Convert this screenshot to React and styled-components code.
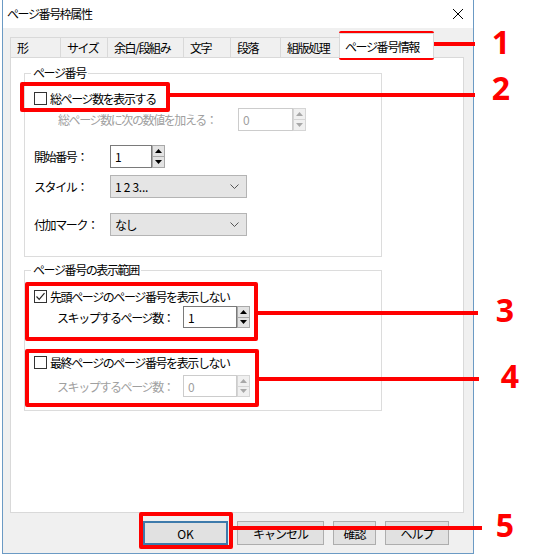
import React from "react";
import styled, { createGlobalStyle } from "styled-components";

const GlobalStyle = createGlobalStyle`
  html, body {
    margin: 0;
    padding: 0;
    background: #fff;
  }
  body {
    font-family: "Noto Sans CJK JP", "Noto Sans", sans-serif;
    font-size: 12px;
    letter-spacing: -1.4px;
    color: #000;
  }
`;

const red = "#ff0000";

const Page = styled.div`
  position: relative;
  width: 535px;
  height: 555px;
  overflow: hidden;
`;

const Window = styled.div`
  box-sizing: border-box;
  margin-left: 2px;
  width: 472px;
  height: 554px;
  border: 1px solid #6b9ac4;
  border-top: none;
  background: #f0f0f0;
  display: flex;
  flex-direction: column;
`;

const TitleBar = styled.div`
  flex: 0 0 28px;
  background: #fff;
  display: flex;
  align-items: center;
  justify-content: space-between;
  padding: 0 9px 0 4px;
`;

const Title = styled.span`
  line-height: 16px;
`;

const Client = styled.div`
  flex: 1;
  display: flex;
  flex-direction: column;
  padding: 5px 9px 0 7px;
`;

const TabRow = styled.div`
  display: flex;
  align-items: flex-end;
  height: 25px;
  margin-bottom: -1px;
  position: relative;
  z-index: 1;
`;

const Tab = styled.div`
  box-sizing: border-box;
  width: ${(p) => p.$w}px;
  height: ${(p) => (p.$active ? 25 : 21)}px;
  margin-left: ${(p) => (p.$first ? 0 : -1)}px;
  padding-left: ${(p) => (p.$active ? 5 : 6)}px;
  display: flex;
  align-items: center;
  border: 1px solid #d9d9d9;
  border-bottom: ${(p) => (p.$active ? "none" : "1px solid #d9d9d9")};
  background: ${(p) => (p.$active ? "#fff" : "#f0f0f0")};
  white-space: nowrap;
`;

const Panel = styled.div`
  box-sizing: border-box;
  height: 456px;
  border: 1px solid #d9d9d9;
  background: #fff;
  padding: 15px 0 0 13px;
`;

const Group = styled.div`
  box-sizing: border-box;
  position: relative;
  width: 358px;
  height: ${(p) => p.$h}px;
  margin-top: ${(p) => p.$mt || 0}px;
  border: 1px solid #dcdcdc;
`;

const GroupLabel = styled.span`
  position: absolute;
  top: -9px;
  left: 6px;
  padding: 0 2px;
  line-height: 16px;
  background: #fff;
`;

const GroupBody = styled.div`
  display: flex;
  flex-direction: column;
  padding-left: 9px;
`;

const Row = styled.div`
  display: flex;
  align-items: center;
  height: ${(p) => p.$h}px;
  margin-top: ${(p) => p.$mt || 0}px;
  padding-left: ${(p) => p.$indent || 0}px;
`;

const Label = styled.span`
  flex: 0 0 ${(p) => p.$w}px;
  color: ${(p) => (p.$disabled ? "#a0a0a0" : "#000")};
  white-space: nowrap;
`;

const Box = styled.span`
  box-sizing: border-box;
  flex: 0 0 13px;
  width: 13px;
  height: 13px;
  border: 1px solid #333;
  background: #fff;
  margin-right: 3px;
  display: flex;
  align-items: center;
  justify-content: center;
`;

const Field = styled.div`
  display: flex;
  height: 100%;
`;

const NumberInput = styled.div`
  box-sizing: border-box;
  width: ${(p) => p.$w}px;
  height: 100%;
  border: 1px solid ${(p) => (p.$disabled ? "#cccccc" : "#7a7a7a")};
  background: #fff;
  color: ${(p) => (p.$disabled ? "#a0a0a0" : "#000")};
  padding-left: 4px;
  letter-spacing: 0;
  display: flex;
  align-items: center;
`;

const Spinner = styled.div`
  display: flex;
  flex-direction: column;
  width: 13px;
  height: 100%;
`;

const SpinButton = styled.div`
  box-sizing: border-box;
  flex: 1;
  display: flex;
  align-items: center;
  justify-content: center;
  background: ${(p) => (p.$disabled ? "#f0f0f0" : "#e3e3e3")};
  border: 1px solid ${(p) => (p.$disabled ? "#d5d5d5" : "#a8a8a8")};
  & + & {
    border-top: none;
  }
`;

const Select = styled.div`
  box-sizing: border-box;
  width: 137px;
  height: 100%;
  background: #e5e5e5;
  border: 1px solid #b4b4b4;
  padding: 0 7px 0 4px;
  display: flex;
  align-items: center;
  justify-content: space-between;
`;

const SelectValue = styled.span`
  letter-spacing: ${(p) => (p.$latin ? "-0.3px" : "inherit")};
`;

const ButtonBar = styled.div`
  display: flex;
  justify-content: flex-end;
  gap: 9px;
  margin-top: 8px;
  padding-right: 15px;
`;

const Button = styled.div`
  box-sizing: border-box;
  width: ${(p) => p.$w}px;
  height: 24px;
  background: #e1e1e1;
  border: ${(p) => (p.$default ? "2px solid #3d7aab" : "1px solid #adadad")};
  letter-spacing: ${(p) => (p.$latin ? 0 : "-1px")};
  display: flex;
  align-items: center;
  justify-content: center;
`;

const Overlay = styled.div`
  position: absolute;
  inset: 0;
  pointer-events: none;
`;

const Mark = styled.div`
  position: absolute;
  box-sizing: border-box;
  left: ${(p) => p.$x}px;
  top: ${(p) => p.$y}px;
  width: ${(p) => p.$w}px;
  height: ${(p) => p.$h}px;
  border: 4px solid ${red};
  border-radius: 2px;
`;

const Leader = styled.div`
  position: absolute;
  left: ${(p) => p.$x1}px;
  top: ${(p) => p.$y - 2}px;
  width: ${(p) => p.$x2 - p.$x1}px;
  height: 4px;
  background: ${red};
`;

const Number = styled.div`
  position: absolute;
  left: ${(p) => p.$cx - 15}px;
  top: ${(p) => p.$top}px;
  width: 30px;
  text-align: center;
  font-family: "Noto Sans", sans-serif;
  font-weight: 700;
  font-size: 32px;
  line-height: 32px;
  letter-spacing: 0;
  color: ${red};
`;

function Arrow({ up, disabled }) {
  return (
    <svg width="7" height="4" viewBox="0 0 7 4">
      <polygon
        points={up ? "0,4 7,4 3.5,0" : "0,0 7,0 3.5,4"}
        fill={disabled ? "#a8a8a8" : "#000"}
      />
    </svg>
  );
}

function SpinField({ value, width, disabled }) {
  return (
    <Field>
      <NumberInput $w={width} $disabled={disabled}>
        {value}
      </NumberInput>
      <Spinner>
        <SpinButton $disabled={disabled}>
          <Arrow up disabled={disabled} />
        </SpinButton>
        <SpinButton $disabled={disabled}>
          <Arrow disabled={disabled} />
        </SpinButton>
      </Spinner>
    </Field>
  );
}

function Checkbox({ checked, label }) {
  return (
    <>
      <Box>
        {checked && (
          <svg width="11" height="11" viewBox="0 0 11 11">
            <polyline
              points="1.5,5.5 4.2,8.3 9.5,2.2"
              fill="none"
              stroke="#222"
              strokeWidth="1.2"
            />
          </svg>
        )}
      </Box>
      <span>{label}</span>
    </>
  );
}

function Dropdown({ value, latin }) {
  return (
    <Select>
      <SelectValue $latin={latin}>{value}</SelectValue>
      <svg width="9" height="5" viewBox="0 0 9 5">
        <polyline points="0.5,0.5 4.5,4.5 8.5,0.5" fill="none" stroke="#555" />
      </svg>
    </Select>
  );
}

const tabs = [
  { label: "形", w: 51 },
  { label: "サイズ", w: 48 },
  { label: "余白/段組み", w: 77 },
  { label: "文字", w: 48 },
  { label: "段落", w: 51 },
  { label: "組版処理", w: 60 },
  { label: "ページ番号情報", w: 95, active: true },
];

const marks = [
  { x: 339, y: 31, w: 95, h: 29, x2: 475, ly: 44, cx: 501, top: 26, n: 1 },
  { x: 20, y: 82, w: 150, h: 30, x2: 475, ly: 95, cx: 501, top: 72, n: 2 },
  { x: 25, y: 282, w: 233, h: 59, x2: 478, ly: 313, cx: 505, top: 294, n: 3 },
  { x: 25, y: 349, w: 234, h: 58, x2: 479, ly: 379, cx: 510, top: 360, n: 4 },
  { x: 139, y: 512, w: 94, h: 37, x2: 482, ly: 528, cx: 505, top: 509, n: 5 },
];

export default function App() {
  return (
    <Page>
      <GlobalStyle />
      <Window>
        <TitleBar>
          <Title>ページ番号枠属性</Title>
          <svg width="12" height="12" viewBox="0 0 12 12">
            <path d="M1 1 L11 11 M11 1 L1 11" stroke="#000" strokeWidth="1" />
          </svg>
        </TitleBar>
        <Client>
          <TabRow>
            {tabs.map((t, i) => (
              <Tab key={t.label} $w={t.w} $active={t.active} $first={i === 0}>
                {t.label}
              </Tab>
            ))}
          </TabRow>
          <Panel>
            <Group $h={184}>
              <GroupLabel>ページ番号</GroupLabel>
              <GroupBody>
                <Row $h={20} $mt={14}>
                  <Checkbox label="総ページ数を表示する" />
                </Row>
                <Row $h={23} $indent={24}>
                  <Label $w={180} $disabled>
                    総ページ数に次の数値を加える：
                  </Label>
                  <SpinField value="0" width={55} disabled />
                </Row>
                <Row $h={23} $mt={14}>
                  <Label $w={76}>開始番号：</Label>
                  <SpinField value="1" width={42} />
                </Row>
                <Row $h={23} $mt={7}>
                  <Label $w={76}>スタイル：</Label>
                  <Dropdown value="1 2 3..." latin />
                </Row>
                <Row $h={23} $mt={15}>
                  <Label $w={76}>付加マーク：</Label>
                  <Dropdown value="なし" />
                </Row>
              </GroupBody>
            </Group>
            <Group $h={141} $mt={13}>
              <GroupLabel>ページ番号の表示範囲</GroupLabel>
              <GroupBody>
                <Row $h={20} $mt={15}>
                  <Checkbox checked label="先頭ページのページ番号を表示しない" />
                </Row>
                <Row $h={22} $indent={23}>
                  <Label $w={126}>スキップするページ数：</Label>
                  <SpinField value="1" width={54} />
                </Row>
                <Row $h={20} $mt={24}>
                  <Checkbox label="最終ページのページ番号を表示しない" />
                </Row>
                <Row $h={22} $mt={3} $indent={23}>
                  <Label $w={126} $disabled>
                    スキップするページ数：
                  </Label>
                  <SpinField value="0" width={54} disabled />
                </Row>
              </GroupBody>
            </Group>
          </Panel>
          <ButtonBar>
            <Button $w={85} $default $latin>
              OK
            </Button>
            <Button $w={87}>キャンセル</Button>
            <Button $w={43}>確認</Button>
            <Button $w={64}>ヘルプ</Button>
          </ButtonBar>
        </Client>
      </Window>
      <Overlay>
        {marks.map((m) => (
          <React.Fragment key={m.n}>
            <Mark $x={m.x} $y={m.y} $w={m.w} $h={m.h} />
            <Leader $x1={m.x + m.w} $x2={m.x2} $y={m.ly} />
            <Number $cx={m.cx} $top={m.top}>
              {m.n}
            </Number>
          </React.Fragment>
        ))}
      </Overlay>
    </Page>
  );
}
